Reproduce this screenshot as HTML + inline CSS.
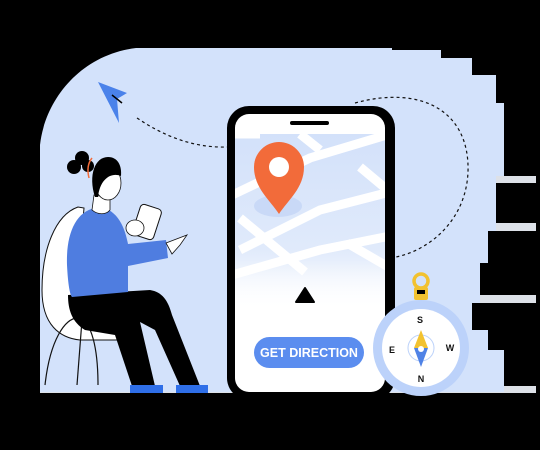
<!DOCTYPE html>
<html><head><style>
html,body{margin:0;padding:0;background:#000;}
svg{display:block}
</style></head><body>
<svg width="540" height="450" viewBox="0 0 540 450" xmlns="http://www.w3.org/2000/svg">
<rect width="540" height="450" fill="#000"/>
<g fill="#dde1e8">
<rect x="490" y="176" width="46" height="7"/>
<rect x="490" y="223" width="46" height="8"/>
<rect x="470" y="295" width="66" height="8"/>
<rect x="40" y="386" width="496" height="7"/>
</g>
<path d="M136,48 H392 V50 H441 V58 H472 V75 H496 V103 H504 V176 H496 V231 H488 V263 H480 V303 H472 V330 H488 V350 H504 V392 H40 V145 C45,100 80,55 136,48 Z" fill="#d3e2fb"/>
<path d="M137,118 C165,137 195,148 227,147" fill="none" stroke="#111" stroke-width="1.2" stroke-dasharray="3,3"/>
<path d="M355,103 C420,85 470,110 468,172 C466,220 430,250 396,257" fill="none" stroke="#111" stroke-width="1.2" stroke-dasharray="3,3"/>
<path d="M98,82 L127,93 L117,99 L119,123 Z" fill="#4a82ea"/>
<path d="M112,95 L122,103 L117,99 Z" fill="#000" stroke="#000" stroke-width="1.5"/>
<rect x="227" y="106" width="168" height="294" rx="22" fill="#000"/>
<rect x="235" y="114" width="150" height="278" rx="14" fill="#fff"/>
<rect x="290" y="121" width="39" height="4" rx="2" fill="#000"/>
<defs>
<linearGradient id="mg" x1="0" y1="0" x2="0" y2="1">
<stop offset="0" stop-color="#d3e1fa"/><stop offset="0.65" stop-color="#e0eafb"/><stop offset="1" stop-color="#fff"/>
</linearGradient>
<linearGradient id="fade" x1="0" y1="0" x2="0" y2="1">
<stop offset="0" stop-color="#fff" stop-opacity="0"/><stop offset="1" stop-color="#fff" stop-opacity="1"/>
</linearGradient>
<clipPath id="sc"><rect x="235" y="134" width="150" height="176"/></clipPath>
</defs>
<g clip-path="url(#sc)">
<rect x="235" y="134" width="150" height="176" fill="url(#mg)"/>
<g stroke="#fff" stroke-width="9" fill="none">
<path d="M228,197 L310,158 L390,134"/>
<path d="M240,250 L320,210 L390,192"/>
<path d="M232,275 L320,250 L390,236"/>
<path d="M240,218 L305,272"/>
<path d="M360,167 L390,192"/>
<path d="M347,243 L390,268"/>
<path d="M235,134 H260"/>
<path d="M300,134 L320,150"/>
</g>
<rect x="235" y="260" width="150" height="50" fill="url(#fade)"/>
</g>
<ellipse cx="278" cy="206" rx="24" ry="11" fill="#c9d9f7"/>
<path d="M279,214 C270,200 254,188 254,167 A25,25 0 0 1 304,167 C304,188 288,200 279,214 Z" fill="#f26b3a"/>
<circle cx="279" cy="167" r="10" fill="#fff"/>
<path d="M305,288 L314,302 L296,302 Z" fill="#000" stroke="#000" stroke-width="2" stroke-linejoin="round"/>
<rect x="254" y="337" width="110" height="31" rx="15.5" fill="#5b8def"/>
<text x="309" y="357" text-anchor="middle" font-family="Liberation Sans, sans-serif" font-weight="bold" font-size="12.5" fill="#fff">GET DIRECTION</text>
<circle cx="421" cy="281" r="7" fill="none" stroke="#f2c230" stroke-width="3.5"/>
<rect x="414" y="287" width="14" height="13" rx="2" fill="#f2c230"/>
<rect x="417" y="290" width="8" height="4" fill="#000"/>
<circle cx="421" cy="348" r="48" fill="#bcd2fa"/>
<circle cx="421" cy="348" r="39" fill="#fff"/>
<circle cx="421" cy="348" r="13" fill="none" stroke="#bcd2fa" stroke-width="1"/>
<path d="M421,330 L428,348 L414,348 Z" fill="#f2c230"/>
<path d="M421,367 L428,348 L414,348 Z" fill="#4f82e6"/>
<circle cx="421" cy="349" r="3" fill="#fff"/>
<g font-family="Liberation Sans, sans-serif" font-weight="bold" font-size="9" fill="#111" text-anchor="middle">
<text x="420" y="323">S</text><text x="392" y="353">E</text><text x="450" y="351">W</text><text x="421" y="382">N</text>
</g>
<path d="M78,207 C55,215 42,250 42,290 C42,325 60,338 80,340 L118,340 L118,310 L90,290 C80,260 82,230 84,208 Z" fill="#fff" stroke="#111" stroke-width="1"/>
<path d="M45,385 C50,340 65,318 78,318 C92,320 98,350 98,385" fill="none" stroke="#111" stroke-width="1.2"/>
<path d="M82,320 L77,385" stroke="#111" stroke-width="1.2"/>
<path d="M68,295 L150,290 C162,292 168,300 172,315 L200,386 L180,386 L155,330 L140,322 L155,386 L132,386 L115,335 L85,330 C72,322 68,310 68,295 Z" fill="#000"/>
<path d="M130,385 H163 V393 H130 Z" fill="#2f6fe8"/>
<path d="M176,385 H208 V393 H176 Z" fill="#2f6fe8"/>
<path d="M95,208 C75,212 66,235 67,265 C68,285 70,295 72,297 L128,292 L128,266 L168,258 L166,240 L128,244 C125,228 118,210 100,207 Z" fill="#4f7de0"/>
<path d="M94,195 L92,210 C98,215 106,215 110,210 L110,198 Z" fill="#fff" stroke="#111" stroke-width="0.8"/>
<ellipse cx="108" cy="183" rx="13" ry="17" fill="#fff" stroke="#111" stroke-width="0.8"/>
<path d="M95,197 C88,175 95,157 108,157 C118,157 122,166 121,176 C112,172 100,178 98,197 Z" fill="#000"/>
<circle cx="74" cy="167" r="7" fill="#000"/><circle cx="82" cy="158" r="7" fill="#000"/><circle cx="88" cy="166" r="6" fill="#000"/>
<path d="M92,158 C88,163 87,170 89,178" stroke="#f26b3a" stroke-width="1.5" fill="none"/>
<rect x="136" y="206" width="22" height="32" rx="4" transform="rotate(18 147 222)" fill="#fff" stroke="#111" stroke-width="1"/>
<ellipse cx="135" cy="228" rx="9" ry="8" fill="#fff" stroke="#111" stroke-width="0.8"/>
<path d="M166,243 L187,235 L180,245 L172,254 Z" fill="#fff" stroke="#111" stroke-width="0.8"/>
</svg>
</body></html>
